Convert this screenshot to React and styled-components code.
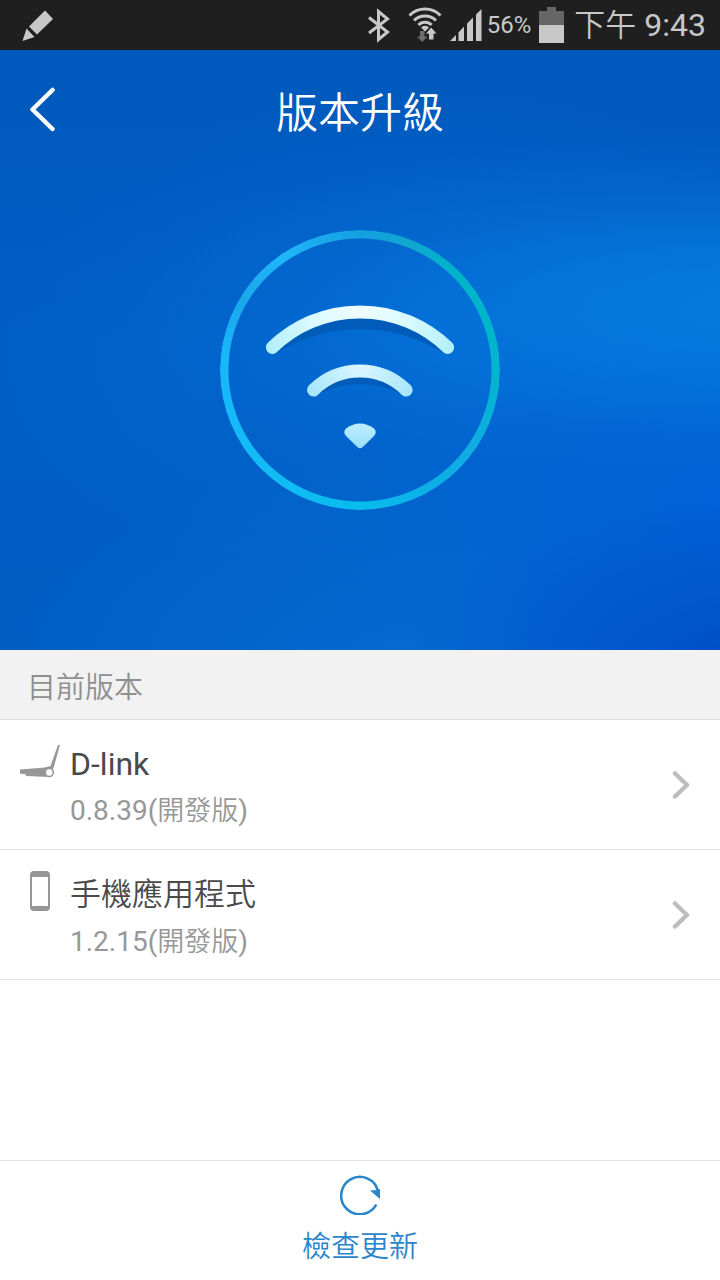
import styled, { createGlobalStyle } from 'styled-components';

const GlobalStyle = createGlobalStyle`
  *, *::before, *::after {
    box-sizing: border-box;
  }
  body {
    margin: 0;
    background: #fff;
    font-family: Roboto, 'Noto Sans CJK TC', sans-serif;
  }
  h1, h2, p, ul {
    margin: 0;
    padding: 0;
    font-weight: 400;
  }
  button {
    border: 0;
    padding: 0;
    background: none;
    font: inherit;
    cursor: pointer;
  }
  svg {
    display: block;
    flex: none;
  }
`;

const Page = styled.div`
  display: flex;
  flex-direction: column;
  min-height: 100vh;
`;

const StatusBar = styled.div`
  display: flex;
  align-items: center;
  justify-content: space-between;
  height: 50px;
  padding: 0 14px 0 20px;
  background: #1f1f1f;
  color: #c8c8c8;
`;

const StatusGroup = styled.div`
  display: flex;
  align-items: center;
  gap: ${(props) => props.$gap}px;
`;

const Battery = styled.span`
  margin-left: -3px;
  font-size: 24px;
  line-height: 36px;
`;

const Clock = styled.time`
  margin-left: 2px;
  font-size: 32px;
  line-height: 50px;
`;

const Cjk = styled.span`
  font-size: ${(props) => props.$size}px;
  font-weight: 350;
`;

const Hero = styled.header`
  height: 600px;
  background:
    radial-gradient(ellipse 90% 30% at 108% 43%, rgba(8, 134, 230, 0.75), rgba(8, 130, 230, 0.55) 35%, rgba(8, 128, 226, 0.18) 70%, rgba(8, 128, 226, 0) 100%),
    radial-gradient(ellipse 48% 30% at 104% 104%, #004cc8, rgba(0, 80, 204, 0.6) 45%, rgba(0, 84, 208, 0) 100%),
    radial-gradient(ellipse 50% 40% at 102% 75%, rgba(0, 98, 226, 0.7), rgba(0, 98, 226, 0) 100%),
    radial-gradient(ellipse 60% 36% at 60% 104%, rgba(6, 112, 220, 0.7), rgba(6, 112, 220, 0) 100%),
    radial-gradient(ellipse 60% 44% at 60% 50%, rgba(4, 108, 216, 0.6), rgba(4, 108, 216, 0) 100%),
    linear-gradient(180deg, #0059bc 0%, #005bc0 22%, #005fc6 50%, #005ec2 100%);
`;

const NavBar = styled.nav`
  display: grid;
  grid-template-columns: 80px 1fr 80px;
  align-items: center;
  height: 120px;
`;

const BackButton = styled.button`
  display: flex;
  align-items: center;
  height: 80px;
  padding-left: 28px;
`;

const Title = styled.h1`
  padding-top: 8px;
  color: #fff;
  font-size: 42px;
  font-weight: 350;
  line-height: 60px;
  text-align: center;
`;

const Emblem = styled.div`
  position: relative;
  width: 280px;
  margin: 60px auto 0;

  &::before {
    content: '';
    position: absolute;
    inset: 0;
    border-radius: 50%;
    background: conic-gradient(
      #14a0e0 0deg,
      #12a6d2 18deg,
      #00b4c8 45deg,
      #00b6cc 90deg,
      #10ace2 125deg,
      #0cb0e6 150deg,
      #08bcee 180deg,
      #12bcf6 225deg,
      #18b8fb 275deg,
      #1aa8ea 300deg,
      #20b6fa 325deg,
      #14a0e0 360deg
    );
    mask: radial-gradient(circle closest-side, transparent 131px, #000 132px);
  }
`;

const SectionTitle = styled.h2`
  height: 70px;
  padding: 4px 27px 0;
  border-bottom: 1px solid #dedede;
  background: #f2f2f2;
  color: #8f8f8f;
  font-size: 29px;
  font-weight: 350;
  line-height: 68px;
`;

const VersionList = styled.ul`
  list-style: none;
`;

const Row = styled.button`
  display: flex;
  align-items: flex-start;
  width: 100%;
  height: 130px;
  padding: 21px 28px 0 20px;
  border-bottom: 1px solid #e2e2e2;
  text-align: left;
`;

const RowText = styled.div`
  flex: 1;
  padding: 3px 0 0 10px;
`;

const RowName = styled.p`
  color: #4a4a4a;
  font-size: 32px;
  line-height: 40px;
`;

const RowVersion = styled.p`
  margin-top: 8px;
  color: #979797;
  font-size: 28px;
  line-height: 38px;
`;

const RowArrow = styled.span`
  align-self: center;
  padding-bottom: 20px;
`;

const Footer = styled.footer`
  margin-top: auto;
  border-top: 1px solid #e2e2e2;
`;

const UpdateButton = styled.button`
  display: flex;
  flex-direction: column;
  align-items: center;
  gap: 11px;
  width: 100%;
  height: 119px;
  padding-top: 14px;
  color: #2a86cb;
  font-size: 29px;
  font-weight: 350;
  line-height: 42px;
`;

function PencilIcon() {
  return (
    <svg width="36" height="36" viewBox="0 0 36 36" fill="#c8c8c8">
      <path d="M25 3.500L33 12L17 27.500L9 19.500Z" />
      <path d="M6.500 21.500L14.500 30L2.500 34Z" />
    </svg>
  );
}

function BluetoothIcon() {
  return (
    <svg width="24" height="36" viewBox="0 0 24 36" fill="none" stroke="#c8c8c8" strokeWidth="3">
      <path d="M2 10.500L20.500 25L11.500 32.500V4.500L20.500 12L2 26" />
    </svg>
  );
}

function WifiIcon() {
  return (
    <svg width="34" height="36" viewBox="0 0 34 36" fill="none" stroke="#c8c8c8" strokeWidth="3">
      <path d="M1.500 8.500A22 22 0 0 1 32.500 8.500" />
      <path d="M6 13.500A15.500 15.500 0 0 1 28 13.500" />
      <path d="M10.500 18A9 9 0 0 1 23.500 18" />
      <path d="M13 20.500A5.500 5.500 0 0 1 21 20.500L17 24.500Z" fill="#c8c8c8" stroke="none" />
      <path d="M12 24H16.500V29.500H19.500L14.200 35L9 29.500H12Z" fill="#6e6e6e" stroke="none" />
      <path d="M20.500 33V27H17L23.200 20L29.400 27H26V33Z" fill="#c8c8c8" stroke="#1f1f1f" strokeWidth="1" />
    </svg>
  );
}

function SignalIcon() {
  return (
    <svg width="32" height="34" viewBox="0 0 32 34" fill="#c8c8c8">
      <path d="M0 33L6 27V33Z" />
      <path d="M8.500 24.500L14 18.500V33H8.500Z" />
      <path d="M17 15.500L23 9.500V33H17Z" />
      <path d="M26 6.500L31.500 1V33H26Z" />
    </svg>
  );
}

function BatteryIcon() {
  return (
    <svg width="25" height="38" viewBox="0 0 25 38">
      <path d="M8 1H17V5H25V19H0V5H8Z" fill="#666" />
      <path d="M0 19H25V37H0Z" fill="#c8c8c8" />
    </svg>
  );
}

function WifiEmblem() {
  return (
    <svg width="280" height="280" viewBox="0 0 280 280" fill="none" strokeWidth="13" strokeLinecap="round">
      <defs>
        <radialGradient id="arc" gradientUnits="userSpaceOnUse" cx="140" cy="75" r="100">
          <stop offset="0" stopColor="#f2fdff" />
          <stop offset="0.500" stopColor="#d8faff" />
          <stop offset="1" stopColor="#b4f0fa" />
        </radialGradient>
        <radialGradient id="innerArc" gradientUnits="userSpaceOnUse" cx="140" cy="136" r="56">
          <stop offset="0" stopColor="#dcf7ff" />
          <stop offset="1" stopColor="#a6e6fc" />
        </radialGradient>
        <linearGradient id="dot" x1="0" y1="0" x2="0" y2="1">
          <stop offset="0" stopColor="#bdeefe" />
          <stop offset="1" stopColor="#98e0fc" />
        </linearGradient>
      </defs>
      <path d="M58 115A163 163 0 0 1 222 115" stroke="#005cb8" />
      <path d="M97 158A96 96 0 0 1 183 158" stroke="#005cb8" />
      <path d="M52.400 117.400A125.800 125.800 0 0 1 227.600 117.400" stroke="url(#arc)" />
      <path d="M93.500 160A66 66 0 0 1 186.200 160" stroke="url(#innerArc)" />
      <path
        d="M126 198.500Q140 188.500 154 198.500Q157.500 202 154 206L142.500 217.200Q140 219.300 137.500 217.200L126 206Q122.500 202 126 198.500Z"
        fill="url(#dot)"
      />
    </svg>
  );
}

function RouterIcon() {
  return (
    <svg width="40" height="40" viewBox="0 0 40 40">
      <path d="M0 28.500L25 26.500L30.500 25L38 4H40L33.500 27L29 36L6 35V33.500L0 32.500Z" fill="#979797" />
      <circle cx="29.300" cy="31.500" r="4" fill="#fff" stroke="#979797" strokeWidth="1.600" />
    </svg>
  );
}

function PhoneIcon() {
  return (
    <svg width="40" height="40" viewBox="0 0 40 40">
      <rect x="10" y="0" width="20" height="40" rx="4" fill="#979797" />
      <rect x="12" y="6" width="16" height="29" fill="#fff" />
    </svg>
  );
}

function ArrowIcon() {
  return (
    <svg width="20" height="30" viewBox="0 0 20 30" fill="none" stroke="#bdbdbd" strokeWidth="4.500" strokeLinecap="round" strokeLinejoin="round">
      <path d="M3 3.500L15 15L3 26.500" />
    </svg>
  );
}

function RefreshIcon() {
  return (
    <svg width="40" height="40" viewBox="0 0 40 40">
      <path d="M36.300 29.500A18.700 18.700 0 1 1 38 16" fill="none" stroke="#2a86cb" strokeWidth="2.600" />
      <path d="M30 15.500L37.500 15L40 14V24Z" fill="#2a86cb" />
    </svg>
  );
}

const versions = [
  { name: 'D-link', number: '0.8.39', icon: <RouterIcon /> },
  { name: <Cjk $size={31}>手機應用程式</Cjk>, number: '1.2.15', icon: <PhoneIcon /> },
];

export default function App() {
  return (
    <>
      <GlobalStyle />
      <Page>
        <StatusBar>
          <PencilIcon />
          <StatusGroup $gap={8}>
            <StatusGroup $gap={17}>
              <BluetoothIcon />
              <WifiIcon />
            </StatusGroup>
            <SignalIcon />
            <Battery>56%</Battery>
            <BatteryIcon />
            <Clock>
              <Cjk $size={31}>下午</Cjk> 9:43
            </Clock>
          </StatusGroup>
        </StatusBar>

        <Hero>
          <NavBar>
            <BackButton aria-label="返回">
              <svg width="28" height="46" viewBox="0 0 28 46" fill="none" stroke="#fff" strokeWidth="4.500" strokeLinecap="round" strokeLinejoin="round">
                <path d="M24.500 3L4.500 22.500L24.500 42" />
              </svg>
            </BackButton>
            <Title>版本升級</Title>
          </NavBar>
          <Emblem>
            <WifiEmblem />
          </Emblem>
        </Hero>

        <main>
          <SectionTitle>目前版本</SectionTitle>
          <VersionList>
            {versions.map((item) => (
              <li key={item.number}>
                <Row>
                  {item.icon}
                  <RowText>
                    <RowName>{item.name}</RowName>
                    <RowVersion>
                      {item.number}(<Cjk $size={27}>開發版</Cjk>)
                    </RowVersion>
                  </RowText>
                  <RowArrow>
                    <ArrowIcon />
                  </RowArrow>
                </Row>
              </li>
            ))}
          </VersionList>
        </main>

        <Footer>
          <UpdateButton>
            <RefreshIcon />
            檢查更新
          </UpdateButton>
        </Footer>
      </Page>
    </>
  );
}
